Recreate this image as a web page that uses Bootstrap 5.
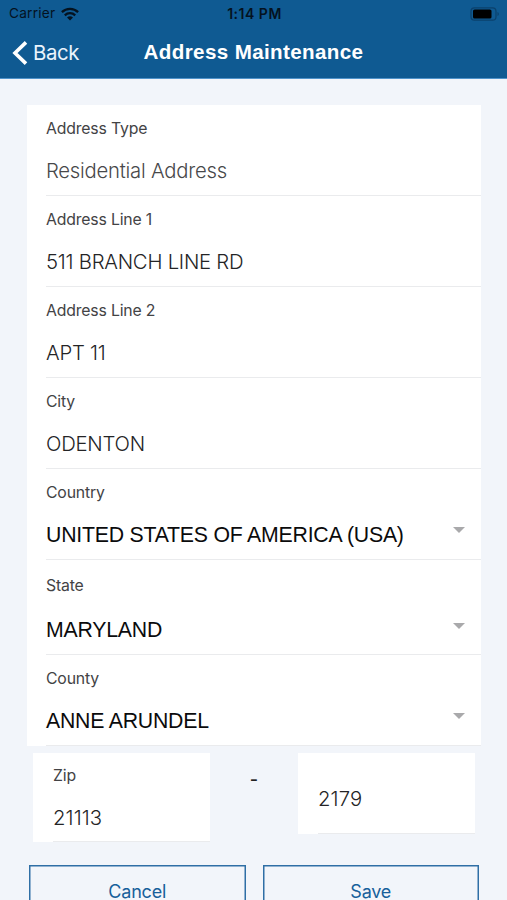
<!DOCTYPE html>
<html lang="en">
<head>
<meta charset="utf-8">
<meta name="viewport" content="width=device-width, initial-scale=1">
<title>Address Maintenance</title>
<link href="https://cdn.jsdelivr.net/npm/bootstrap@5.3.0/dist/css/bootstrap.min.css" rel="stylesheet">
<style>
html, body { height: 100%; overflow: hidden; }
body { background: #f2f5fa; font-family: Inter, "Liberation Sans", sans-serif; width: 507px; }
.screen { height: 900px; overflow: hidden; }
.app-head { background: #0f5a92; height: 79px; border-bottom: 1px solid #4f93cb; }
.status { height: 27px; color: #04121f; font-size: 13.7px; line-height: 27px; padding: 0 7px 0 9px; }
.status > div { flex: 1 1 0; }
.carrier { letter-spacing: .2px; }
.wifi { margin-left: 6px; }
.clock { font-weight: 600; font-size: 14px; letter-spacing: .5px; }
.titlebar { height: 51px; color: #fff; padding: 0 12px; }
.titlebar > * { flex: 1 1 0; }
.back { font-size: 20.4px; font-weight: 400; letter-spacing: -.4px; color: #eaf4fd; line-height: 50px; }
.page-title { flex: 0 0 auto; font: bold 20.6px/50px "Liberation Sans", sans-serif; letter-spacing: .37px; margin: 0; }
.form-sheet { margin: 26px 26px 0 27px; background: #fff; }
.field { height: 91px; margin-left: 19px; padding-top: 14px; border-bottom: 1px solid #eaebed; }
.field-name { display: block; font-size: 15.8px; line-height: 20px; color: #434345; letter-spacing: -.17px; font-weight: 400; }
.field-value { display: block; font-size: 20.3px; line-height: 26px; margin-top: 19px; color: #242426; font-weight: 300; letter-spacing: -.24px; white-space: nowrap; }
.soft { color: #48484a; }
.picked { font-family: "Liberation Sans", sans-serif; font-size: 21.25px; font-weight: 400; color: #0b0b0c; letter-spacing: -.21px; }
.arrow { width: 12px; height: 6px; background: #a9a9ab; clip-path: polygon(0 0, 100% 0, 50% 100%); margin: 24px 16px 0 0; }
.state-field { height: 95px; padding-top: 16px; }
.state-field .field-value { margin-top: 21px; }
.state-field .arrow { margin-top: 27px; }
.county-field { height: 91px; }
.zip-row { padding: 7px 32px 0 33px; height: 119px; }
.zip-box { width: 177px; background: #fff; }
.zip-box .field { margin-left: 20px; height: 89px; padding-top: 13px; }
.zip-box .plus4 { height: 81px; padding-top: 14px; }
.zip-box .field-value { letter-spacing: .12px; }
.dash { font-size: 18px; font-weight: 500; line-height: 20px; padding-top: 17px; color: #222; }
.actions { padding: 0 28px 0 29px; gap: 17px; }
.action { flex: 1; height: 52px; border: 1px solid #2f6fa5; border-radius: 0; color: #17609b; font-size: 18px; line-height: 24px; padding: 14px 0; letter-spacing: -.2px; box-shadow: inset 0 0 0 .5px #2f6fa5; }
</style>
</head>
<body>
<div class="screen">
  <header class="app-head">
    <div class="status d-flex">
      <div class="carrier d-flex align-items-center">Carrier
        <svg class="wifi" width="18" height="14" viewBox="0 0 18 14"><g fill="none" stroke="#04121f" stroke-width="2.3"><path d="M.9 5.2a11.7 11.7 0 0 1 16.2 0"/><path d="M3.8 8.3a7.5 7.5 0 0 1 10.4 0"/></g><path d="M9 13.6 6 10.6a4.3 4.3 0 0 1 6 0z" fill="#04121f"/></svg>
      </div>
      <div class="clock text-center">1:14 PM</div>
      <div class="d-flex justify-content-end align-items-center">
        <svg width="30" height="14" viewBox="0 0 30 14"><rect x="1" y=".8" width="25" height="12.4" rx="3.5" fill="none" stroke="#0b416c" stroke-width="1.2"/><rect x="3" y="2.5" width="18.5" height="9" rx="1.6" fill="#000"/><path d="M27.5 5v4c1.8-.6 1.8-3.4 0-4z" fill="#0b416c"/></svg>
      </div>
    </div>
    <div class="titlebar d-flex">
      <div class="back d-flex align-items-center">
        <svg class="me-1" width="17" height="26" viewBox="0 0 17 26"><path d="M14 2.4 3 13l11 10.6" fill="none" stroke="#fff" stroke-width="3.6"/></svg>Back
      </div>
      <h1 class="page-title">Address Maintenance</h1>
      <span></span>
    </div>
  </header>
  <main>
    <section class="form-sheet">
      <div class="field"><span class="field-name">Address Type</span><span class="field-value soft">Residential Address</span></div>
      <div class="field"><span class="field-name">Address Line 1</span><span class="field-value">511 BRANCH LINE RD</span></div>
      <div class="field"><span class="field-name">Address Line 2</span><span class="field-value">APT 11</span></div>
      <div class="field"><span class="field-name">City</span><span class="field-value">ODENTON</span></div>
      <div class="field"><span class="field-name">Country</span><div class="d-flex justify-content-between"><span class="field-value picked">UNITED STATES OF AMERICA (USA)</span><i class="arrow"></i></div></div>
      <div class="field state-field"><span class="field-name">State</span><div class="d-flex justify-content-between"><span class="field-value picked">MARYLAND</span><i class="arrow"></i></div></div>
      <div class="field county-field"><span class="field-name">County</span><div class="d-flex justify-content-between"><span class="field-value picked">ANNE ARUNDEL</span><i class="arrow"></i></div></div>
    </section>
    <div class="zip-row d-flex justify-content-between align-items-start">
      <div class="zip-box"><div class="field"><span class="field-name">Zip</span><span class="field-value">21113</span></div></div>
      <span class="dash">-</span>
      <div class="zip-box"><div class="field plus4"><span class="field-value">2179</span></div></div>
    </div>
    <div class="actions d-flex">
      <button class="btn action" type="button">Cancel</button>
      <button class="btn action" type="button">Save</button>
    </div>
  </main>
</div>
<script src="https://cdn.jsdelivr.net/npm/bootstrap@5.3.0/dist/js/bootstrap.bundle.min.js"></script>
</body>
</html>
